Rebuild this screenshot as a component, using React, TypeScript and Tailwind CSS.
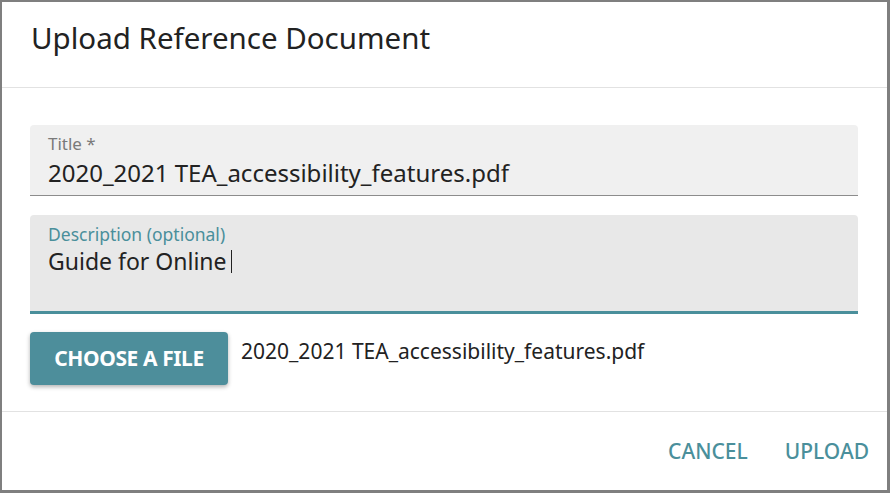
import React from 'react';

const font = { fontFamily: '"Noto Sans", "Open Sans", sans-serif' };

const App: React.FC = () => {
  return (
    <div
      className="w-[890px] h-[493px] bg-white border-t-2 border-l-2 border-r-[3px] border-b-[3px] border-[#7f7f7f] flex flex-col text-[#222]"
      style={font}
    >
      {/* header */}
      <div className="h-[86px] shrink-0 border-b border-[#e2e2e2] pl-[29px] pt-[16px]">
        <h2 className="text-[29.5px] leading-[40px] text-[#222]">Upload Reference Document</h2>
      </div>

      {/* body */}
      <div className="flex flex-col shrink-0 px-[28px] pt-[37px] h-[324px] border-b border-[#e2e2e2]">
        <div className="w-[828px] h-[71px] bg-[#f0f0f0] rounded-t-[4px] border-b border-[#8c8c8c] px-[18px] pt-[9px]">
          <div className="text-[17px] leading-[20px] text-[#7a7a7a]">Title *</div>
          <div className="mt-[3px] text-[24px] leading-[32px] text-[#222] whitespace-nowrap">2020_2021 TEA_accessibility_features.pdf</div>
        </div>

        <div className="mt-[19px] w-[828px] h-[99px] bg-[#e8e8e8] rounded-t-[4px] border-b-[3px] border-[#4a8f9b] px-[18px] pt-[9px]">
          <div className="text-[17.5px] leading-[20px] text-[#4a8f9b]">Description (optional)</div>
          <div className="mt-[1px] text-[23px] leading-[32px] text-[#222] flex items-center">
            Guide for Online<span className="inline-block w-px h-[23px] bg-[#222] ml-[4px]" />
          </div>
        </div>

        <div className="mt-[18px] flex items-start gap-[13px]">
          <button className="w-[198px] h-[53px] rounded-[4px] bg-[#4d8e9b] text-white text-[21px] font-bold tracking-[-0.4px] shadow-[0_2px_4px_rgba(0,0,0,0.3)]">
            CHOOSE A FILE
          </button>
          <div className="text-[21px] leading-[24px] pt-[7px] text-[#222] whitespace-nowrap">2020_2021 TEA_accessibility_features.pdf</div>
        </div>
      </div>

      {/* footer */}
      <div className="flex-1 flex items-center justify-end gap-[37px] pr-[18px]">
        <button className="text-[21px] leading-[28px] font-medium text-[#4a8f9b]">CANCEL</button>
        <button className="text-[21px] leading-[28px] font-medium text-[#4a8f9b]">UPLOAD</button>
      </div>
    </div>
  );
};

export default App;
